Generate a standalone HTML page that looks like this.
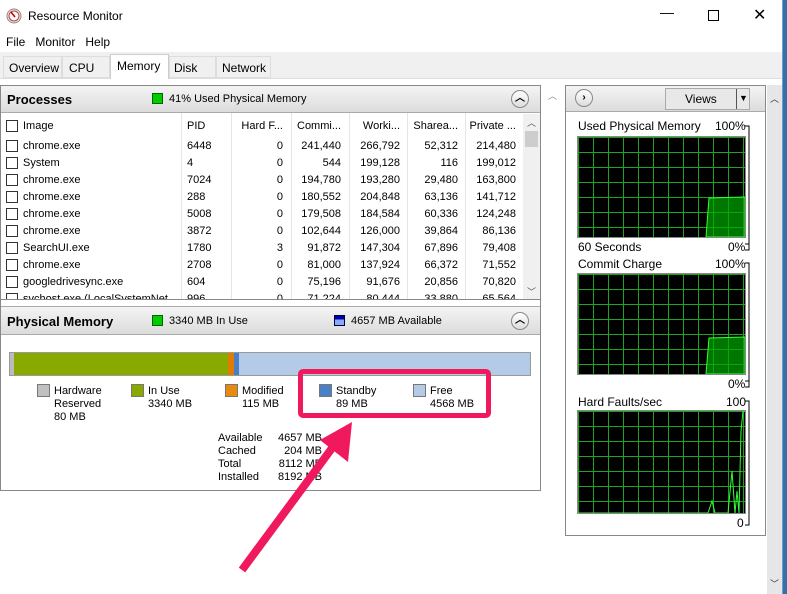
<!DOCTYPE html>
<html><head><meta charset="utf-8"><style>
*{margin:0;padding:0;box-sizing:border-box}
body{width:787px;height:594px;background:#fff;font-family:"Liberation Sans","DejaVu Sans",sans-serif;font-size:11px;color:#000;position:relative;overflow:hidden}
.a{position:absolute;white-space:nowrap}
.hdr{position:absolute;background:linear-gradient(#f4f4f4,#dcdcdc);border-bottom:1px solid #aaa}
.cb{position:absolute;width:12px;height:12px;border:1px solid #333;background:#fff}
.r{text-align:right}
.sq{position:absolute;width:13px;height:13px;border:1px solid #777}
.up{position:absolute;width:18px;height:18px;border-radius:50%;border:1px solid #888;background:linear-gradient(#fff,#ddd);text-align:center;font-size:10px;line-height:15px;font-weight:bold}
.g{position:absolute;background-color:#000;background-image:linear-gradient(90deg,#1fa31f 1px,transparent 1px),linear-gradient(#1fa31f 1px,transparent 1px);background-size:15px 15px;border:1px solid #888}
</style></head><body>
<svg class="a" style="left:6px;top:8px" width="16" height="16"><circle cx="8" cy="8" r="7" fill="#eee" stroke="#888"/><circle cx="8" cy="8" r="5" fill="#fff" stroke="#c33"/><line x1="5" y1="4" x2="9" y2="9" stroke="#c00" stroke-width="1.6"/></svg>
<div class="a" style="left:28px;top:9px;font-size:12px">Resource Monitor</div>
<div class="a" style="left:660px;top:4px;font-size:14px">—</div>
<div class="a" style="left:708px;top:10px;width:11px;height:11px;border:1px solid #000"></div>
<div class="a" style="left:753px;top:5px;font-size:16px">✕</div>
<div class="a" style="left:6px;top:35px;font-size:12px">File&nbsp;&nbsp;&nbsp;Monitor&nbsp;&nbsp;&nbsp;Help</div>
<!-- tabs -->
<div class="a" style="left:0;top:52px;width:782px;height:27px;background:#f0f0f0;border-bottom:1px solid #ddd"></div>
<div class="a" style="left:3px;top:56px;width:59px;height:22px;border:1px solid #ddd;background:#f0f0f0;font-size:12px;padding:4px 5px">Overview</div>
<div class="a" style="left:62px;top:56px;width:48px;height:22px;border:1px solid #ddd;background:#f0f0f0;font-size:12px;padding:4px 6px">CPU</div>
<div class="a" style="left:110px;top:54px;width:59px;height:25px;border:1px solid #ccc;border-bottom:none;background:#fff;font-size:12px;padding:4px 6px">Memory</div>
<div class="a" style="left:169px;top:56px;width:47px;height:22px;border:1px solid #ddd;background:#f0f0f0;font-size:12px;padding:4px 4px">Disk</div>
<div class="a" style="left:216px;top:56px;width:55px;height:22px;border:1px solid #ddd;background:#f0f0f0;font-size:12px;padding:4px 5px">Network</div>
<div class="a" style="left:0;top:79px;width:782px;height:515px;background:#fff"></div>
<div class="a" style="left:782px;top:0;width:5px;height:594px;background:#3b6ea5;border-left:1px solid #6aa0d8"></div>
<!-- processes -->
<div class="a" style="left:0;top:85px;width:541px;height:406px;border:1px solid #888"></div>
<div class="hdr" style="left:1px;top:86px;width:539px;height:27px"></div>
<div class="a" style="left:7px;top:92px;font-size:13px;font-weight:bold">Processes</div>
<div class="a" style="left:152px;top:93px;width:11px;height:11px;background:#0c0;border:1px solid #060"></div>
<div class="a" style="left:169px;top:93px">41% Used Physical Memory</div>
<div class="up" style="left:511px;top:90px">︿</div>
<div class="a" style="left:1px;top:113px;width:522px;height:186px;overflow:hidden">
<div style="position:absolute;left:180px;top:0;width:1px;height:186px;background:#e5e5e5"></div>
<div style="position:absolute;left:230px;top:0;width:1px;height:186px;background:#e5e5e5"></div>
<div style="position:absolute;left:290px;top:0;width:1px;height:186px;background:#e5e5e5"></div>
<div style="position:absolute;left:348px;top:0;width:1px;height:186px;background:#e5e5e5"></div>
<div style="position:absolute;left:406px;top:0;width:1px;height:186px;background:#e5e5e5"></div>
<div style="position:absolute;left:464px;top:0;width:1px;height:186px;background:#e5e5e5"></div>
</div>
<div id="rows"></div>
<div class="a" style="left:523px;top:114px;width:17px;height:185px;background:#f0f0f0"></div>
<div class="a" style="left:525px;top:131px;width:13px;height:16px;background:#cdcdcd"></div>
<div class="a" style="left:527px;top:116px;font-size:9px;color:#555">︿</div>
<div class="a" style="left:527px;top:285px;font-size:9px;color:#555">﹀</div>
<!-- physical memory -->
<div class="a" style="left:0;top:299px;width:541px;height:1px;background:#888"></div>
<div class="hdr" style="left:1px;top:306px;width:539px;height:29px;border-top:1px solid #aaa"></div>
<div class="a" style="left:7px;top:314px;font-size:13px;font-weight:bold">Physical Memory</div>
<div class="a" style="left:152px;top:315px;width:11px;height:11px;background:#0c0;border:1px solid #060"></div>
<div class="a" style="left:169px;top:315px">3340 MB In Use</div>
<div class="a" style="left:334px;top:315px;width:11px;height:11px;background:linear-gradient(#00a 40%,#8af 40%);border:1px solid #003"></div>
<div class="a" style="left:351px;top:315px">4657 MB Available</div>
<div class="up" style="left:511px;top:312px">︿</div>
<div class="a" style="left:9px;top:352px;width:522px;height:24px;border:1px solid #999;background:#b4cbe8"></div>
<div class="a" style="left:10px;top:353px;width:4px;height:22px;background:#bbb"></div>
<div class="a" style="left:14px;top:353px;width:214px;height:22px;background:#88aa00"></div>
<div class="a" style="left:228px;top:353px;width:6px;height:22px;background:#e07c00"></div>
<div class="a" style="left:234px;top:353px;width:5px;height:22px;background:#4a80c8"></div>
<div class="sq" style="left:37px;top:384px;background:#c0c0c0"></div>
<div class="a" style="left:54px;top:385px;line-height:13px">Hardware<br>Reserved<br>80 MB</div>
<div class="sq" style="left:131px;top:384px;background:#88aa00"></div>
<div class="a" style="left:148px;top:385px;line-height:13px">In Use<br>3340 MB</div>
<div class="sq" style="left:225px;top:384px;background:#e88a10"></div>
<div class="a" style="left:242px;top:385px;line-height:13px">Modified<br>115 MB</div>
<div class="sq" style="left:319px;top:384px;background:#4a80c8"></div>
<div class="a" style="left:336px;top:385px;line-height:13px">Standby<br>89 MB</div>
<div class="sq" style="left:413px;top:384px;background:#b4cbe8"></div>
<div class="a" style="left:430px;top:385px;line-height:13px">Free<br>4568 MB</div>
<div class="a" style="left:218px;top:432px;line-height:13px">Available<br>Cached<br>Total<br>Installed</div>
<div class="a r" style="left:270px;top:432px;width:52px;line-height:13px">4657 MB<br>204 MB<br>8112 MB<br>8192 MB</div>
<!-- right panel -->
<div class="a" style="left:565px;top:85px;width:201px;height:451px;border:1px solid #888"></div>
<div class="hdr" style="left:566px;top:86px;width:199px;height:26px"></div>
<div class="up" style="left:575px;top:89px">›</div>
<div class="a" style="left:665px;top:88px;width:85px;height:22px;border:1px solid #aaa;background:#e8e8e8;font-size:12px;padding:3px 0 0 19px">Views</div>
<div class="a" style="left:736px;top:89px;width:1px;height:20px;background:#555"></div>
<div class="a" style="left:739px;top:93px;font-size:9px">▼</div>
<div class="a" style="left:548px;top:89px;font-size:9px;color:#888">︿</div>
<div class="a" style="left:767px;top:85px;width:15px;height:509px;background:#e6e6e6"></div>
<div class="a" style="left:770px;top:92px;font-size:9px;color:#333">︿</div>
<div class="a" style="left:770px;top:577px;font-size:9px;color:#333">﹀</div>

<div class="a" style="left:578px;top:119px;font-size:12px">Used Physical Memory</div><div class="a" style="left:715px;top:119px;font-size:12px">100%</div>
<div class="g" style="left:577px;top:136px;width:169px;height:102px"></div>
<svg class="a" style="left:578px;top:137px" width="167" height="100"><polygon points="128,100 131,61 167,60 167,100" fill="rgba(0,170,0,.7)" stroke="#3f3" /></svg>
<div class="a" style="left:578px;top:240px;font-size:12px">60 Seconds</div><div class="a" style="left:728px;top:240px;font-size:12px">0%</div>
<div class="a" style="left:578px;top:257px;font-size:12px">Commit Charge</div><div class="a" style="left:715px;top:257px;font-size:12px">100%</div>
<div class="g" style="left:577px;top:273px;width:169px;height:102px"></div>
<svg class="a" style="left:578px;top:274px" width="167" height="100"><polygon points="128,100 131,64 167,63 167,100" fill="rgba(0,170,0,.7)" stroke="#3f3"/></svg>
<div class="a" style="left:728px;top:377px;font-size:12px">0%</div>
<div class="a" style="left:578px;top:395px;font-size:12px">Hard Faults/sec</div><div class="a" style="left:726px;top:395px;font-size:12px">100</div>
<div class="g" style="left:577px;top:410px;width:169px;height:104px"></div>
<svg class="a" style="left:578px;top:411px" width="167" height="102"><polyline points="0,102 130,102 134,90 137,102 150,102 154,60 157,102 159,80 161,102 163,20 165,0 167,0" fill="none" stroke="#3f3"/></svg>
<div class="a" style="left:737px;top:516px;font-size:12px">0</div>
<svg class="a" style="left:745px;top:120px" width="8" height="410"><path d="M0,6H4V130H0M4,124H0M0,143H4V267H0M4,261H0M0,281H4V405H0" fill="none" stroke="#000"/></svg>
<!-- annotation -->
<div class="a" style="left:298px;top:369px;width:193px;height:49px;border:5px solid #f0195e;border-radius:5px"></div>
<svg class="a" style="left:0;top:0" width="787" height="594"><line x1="242" y1="570" x2="338" y2="440" stroke="#f0195e" stroke-width="8"/><polygon points="352,422 320,440 348,462" fill="#f0195e"/></svg>
<script>
var d=[["Image","PID","Hard F...","Commi...","Worki...","Sharea...","Private ..."],["chrome.exe",6448,0,"241,440","266,792","52,312","214,480"],["System",4,0,"544","199,128","116","199,012"],["chrome.exe",7024,0,"194,780","193,280","29,480","163,800"],["chrome.exe",288,0,"180,552","204,848","63,136","141,712"],["chrome.exe",5008,0,"179,508","184,584","60,336","124,248"],["chrome.exe",3872,0,"102,644","126,000","39,864","86,136"],["SearchUI.exe",1780,3,"91,872","147,304","67,896","79,408"],["chrome.exe",2708,0,"81,000","137,924","66,372","71,552"],["googledrivesync.exe",604,0,"75,196","91,676","20,856","70,820"],["svchost.exe (LocalSystemNet...",996,0,"71,224","80,444","33,880","65,564"]];
var h="",R=[283,341,400,458,516];
d.forEach(function(r,i){var y=i==0?120:123+i*17;var s='<div class="a" style="left:0;top:'+y+'px;width:522px;height:14px;overflow:hidden'+(i==10?';clip-path:inset(0 0 8px 0)':'')+'">';
s+='<div class="cb" style="left:6px;top:0"></div><div class="a" style="left:23px;top:0">'+r[0]+'</div><div class="a" style="left:187px;top:0">'+r[1]+'</div>';
for(var j=2;j<7;j++)s+='<div class="a r" style="left:'+(R[j-2]-60)+'px;width:60px;top:0">'+r[j]+'</div>';
h+=s+'</div>';});
document.getElementById("rows").innerHTML=h;
</script>
</body></html>
